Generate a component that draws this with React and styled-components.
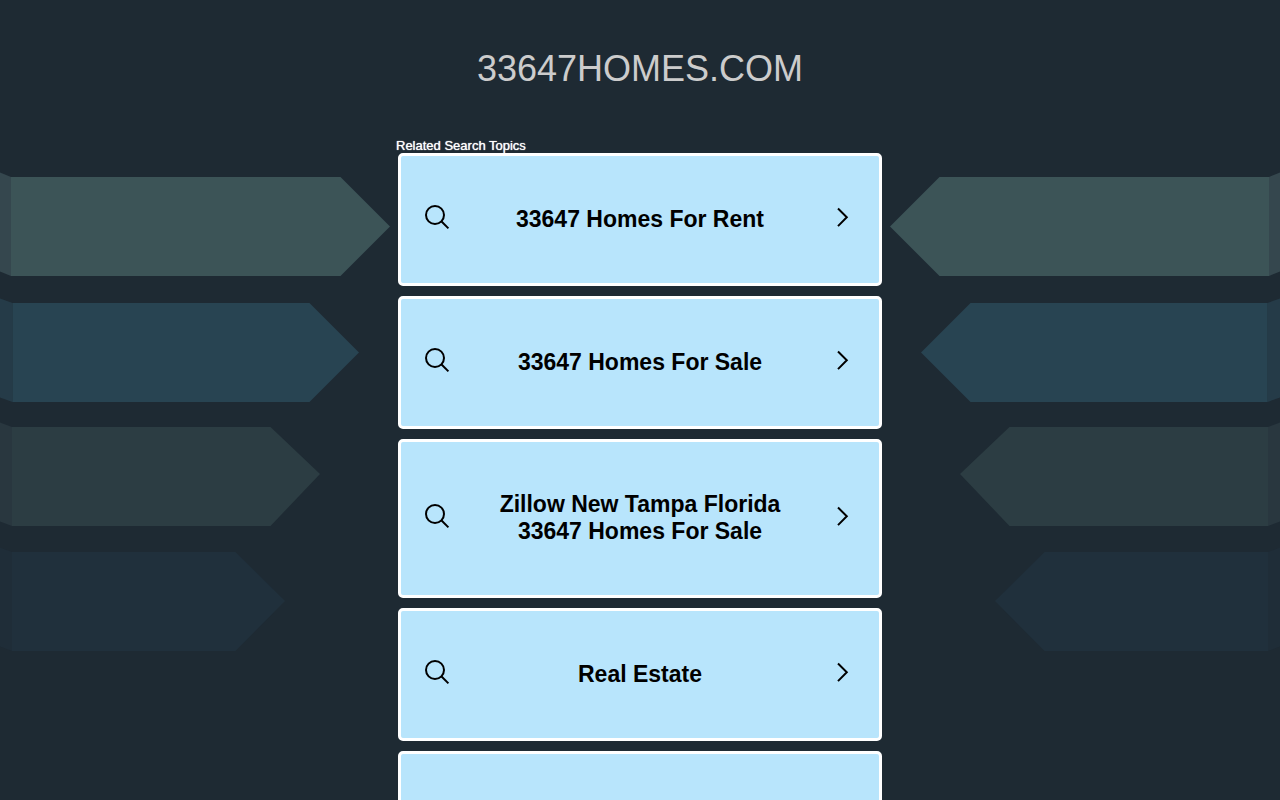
import React from 'react';
import styled, { createGlobalStyle } from 'styled-components';

const GlobalStyle = createGlobalStyle`
  * {
    box-sizing: border-box;
  }

  body {
    margin: 0;
    background-color: #1e2a33;
    font-family: Arial, 'Liberation Sans', sans-serif;
  }
`;

const Page = styled.div`
  position: relative;
  height: 100vh;
  overflow: hidden;
`;

const Ribbons = styled.svg`
  position: absolute;
  top: 172px;
  ${(props) => (props.$side === 'right' ? 'right: 0;' : 'left: 0;')}
  transform: ${(props) => (props.$side === 'right' ? 'scaleX(-1)' : 'none')};
`;

const Main = styled.main`
  position: relative;
  width: 100%;
  max-width: 488px;
  margin: 0 auto;
  padding: 0 2px;
`;

const Title = styled.h1`
  margin: 0;
  padding: 48px 0;
  color: #cccccc;
  font-size: 36px;
  font-weight: 400;
  line-height: 42px;
  text-align: center;
`;

const Topics = styled.nav`
  display: flex;
  flex-direction: column;
`;

const TopicsLabel = styled.h2`
  margin: 0 -2px;
  color: #ffffff;
  font-size: 13px;
  font-weight: 400;
  line-height: 15px;
  text-shadow: 0 0 1px #ffffff;
`;

const TopicList = styled.ul`
  display: flex;
  flex-direction: column;
  gap: 10px;
  margin: 0;
  padding: 0;
  list-style: none;
`;

const TopicLink = styled.a`
  display: flex;
  align-items: center;
  min-height: 133px;
  padding: 49px 24px 50px;
  border: 3px solid #ffffff;
  border-radius: 5px;
  background-color: #b8e5fc;
  color: #000000;
  text-decoration: none;
`;

const TopicText = styled.span`
  flex: 1;
  padding: 0 48px;
  font-size: 23px;
  font-weight: 700;
  line-height: 27px;
  text-align: center;
`;

const Icon = styled.svg`
  flex: none;
  margin-top: -4px;
  fill: none;
  stroke: currentColor;
  stroke-width: 2;
`;

const ribbons = [
  { color: '#3c5457', fold: '#35474e', foldX: 11, top: 5, shoulder: 340.5, tipX: 390, tipY: 54.5 },
  { color: '#284452', fold: '#253b48', foldX: 12.5, top: 131, shoulder: 309.5, tipX: 359, tipY: 180.5 },
  { color: '#2c3d43', fold: '#29373f', foldX: 12, top: 255, shoulder: 270.5, tipX: 320, tipY: 302 },
  { color: '#20303c', fold: '#1f2d38', foldX: 12, top: 380, shoulder: 235.5, tipX: 285, tipY: 429 },
];

const topics = [
  '33647 Homes For Rent',
  '33647 Homes For Sale',
  'Zillow New Tampa Florida 33647 Homes For Sale',
  'Real Estate',
  '',
];

const RibbonSet = ({ side }) => (
  <Ribbons $side={side} width="390" height="480" viewBox="0 0 390 480" aria-hidden="true">
    {ribbons.map(({ color, fold, foldX, top, shoulder, tipX, tipY }) => (
      <g key={color}>
        <path
          fill={fold}
          d={`M0 ${top - 4.5}L${foldX} ${top}V${top + 99}L0 ${top + 94.5}Z`}
        />
        <path
          fill={color}
          d={`M${foldX} ${top}H${shoulder}L${tipX} ${tipY}L${shoulder} ${top + 99}H${foldX}Z`}
        />
      </g>
    ))}
  </Ribbons>
);

const SearchIcon = () => (
  <Icon width="25" height="25" viewBox="0 0 25 25" aria-hidden="true">
    <circle cx="10" cy="10" r="9" />
    <path d="M16.3 16.3L23.4 23.4" />
  </Icon>
);

const ChevronIcon = () => (
  <Icon width="25" height="25" viewBox="0 0 25 25" aria-hidden="true">
    <path d="M8 3.5L16.8 12.3L8 21.1" />
  </Icon>
);

const App = () => (
  <>
    <GlobalStyle />
    <Page>
      <RibbonSet side="left" />
      <RibbonSet side="right" />
      <Main>
        <Title>33647HOMES.COM</Title>
        <Topics aria-labelledby="topics-label">
          <TopicsLabel id="topics-label">Related Search Topics</TopicsLabel>
          <TopicList>
            {topics.map((topic, index) => (
              <li key={index}>
                <TopicLink href="#">
                  <SearchIcon />
                  <TopicText>{topic}</TopicText>
                  <ChevronIcon />
                </TopicLink>
              </li>
            ))}
          </TopicList>
        </Topics>
      </Main>
    </Page>
  </>
);

export default App;
